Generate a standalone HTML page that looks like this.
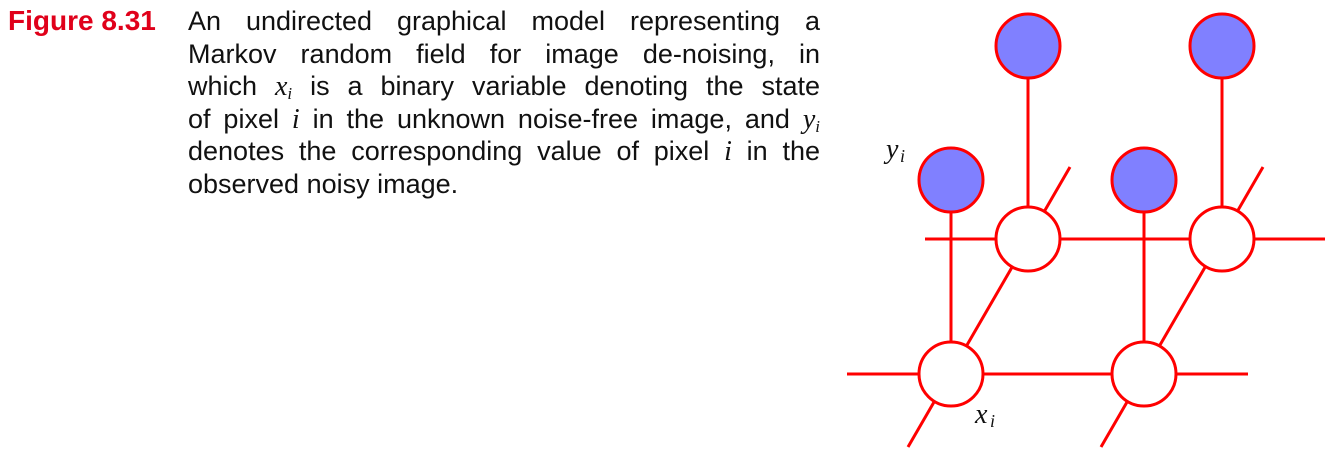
<!DOCTYPE html>
<html><head><style>
body{margin:0;width:1331px;height:466px;background:#fff;position:relative;overflow:hidden;font-family:"Liberation Sans",sans-serif;}
.fig{position:absolute;left:8px;top:5px;color:#e0001a;font-weight:bold;font-size:28px;}
.txt{position:absolute;left:188px;top:5px;width:632px;font-size:27px;color:#111;}
.l{height:32.6px;line-height:32.6px;text-align:justify;text-align-last:justify;white-space:nowrap;}
.last{text-align-last:left;}
.m{font-family:"Liberation Serif",serif;font-style:italic;font-size:28px;}
sub{font-size:17px;line-height:0;vertical-align:-4px;}
</style></head><body>
<div class="fig">Figure 8.31</div>
<div class="txt">
<div class="l">An undirected graphical model representing a</div>
<div class="l">Markov random field for image de-noising, in</div>
<div class="l">which <span class="m">x<sub>i</sub></span> is a binary variable denoting the state</div>
<div class="l">of pixel <span class="m">i</span> in the unknown noise-free image, and <span class="m">y<sub>i</sub></span></div>
<div class="l">denotes the corresponding value of pixel <span class="m">i</span> in the</div>
<div class="l last">observed noisy image.</div>
</div>
<svg width="1331" height="466" style="position:absolute;left:0;top:0" stroke="#f00" stroke-width="3">
<g>
<line x1="925" y1="239" x2="1325" y2="239"/>
<line x1="847" y1="374" x2="1248" y2="374"/>
<line x1="908" y1="447" x2="1070" y2="167"/>
<line x1="1101" y1="447" x2="1263" y2="167"/>
<line x1="951" y1="180" x2="951" y2="374"/>
<line x1="1144" y1="180" x2="1144" y2="374"/>
<line x1="1028" y1="46" x2="1028" y2="239"/>
<line x1="1222" y1="46" x2="1222" y2="239"/>
</g>
<g fill="#8080ff">
<circle cx="1028" cy="46" r="32"/><circle cx="1222" cy="46" r="32"/>
<circle cx="951" cy="180" r="32"/><circle cx="1144" cy="180" r="32"/>
</g>
<g fill="#fff">
<circle cx="1028" cy="239" r="32"/><circle cx="1222" cy="239" r="32"/>
<circle cx="951" cy="374" r="32"/><circle cx="1144" cy="374" r="32"/>
</g>
<g stroke="none" fill="#111" font-family="Liberation Serif,serif" font-style="italic">
<text x="886" y="158" font-size="28">y</text><text x="900" y="162" font-size="18">i</text>
<text x="975" y="423" font-size="28">x</text><text x="990" y="427" font-size="18">i</text>
</g>
</svg>
</body></html>
